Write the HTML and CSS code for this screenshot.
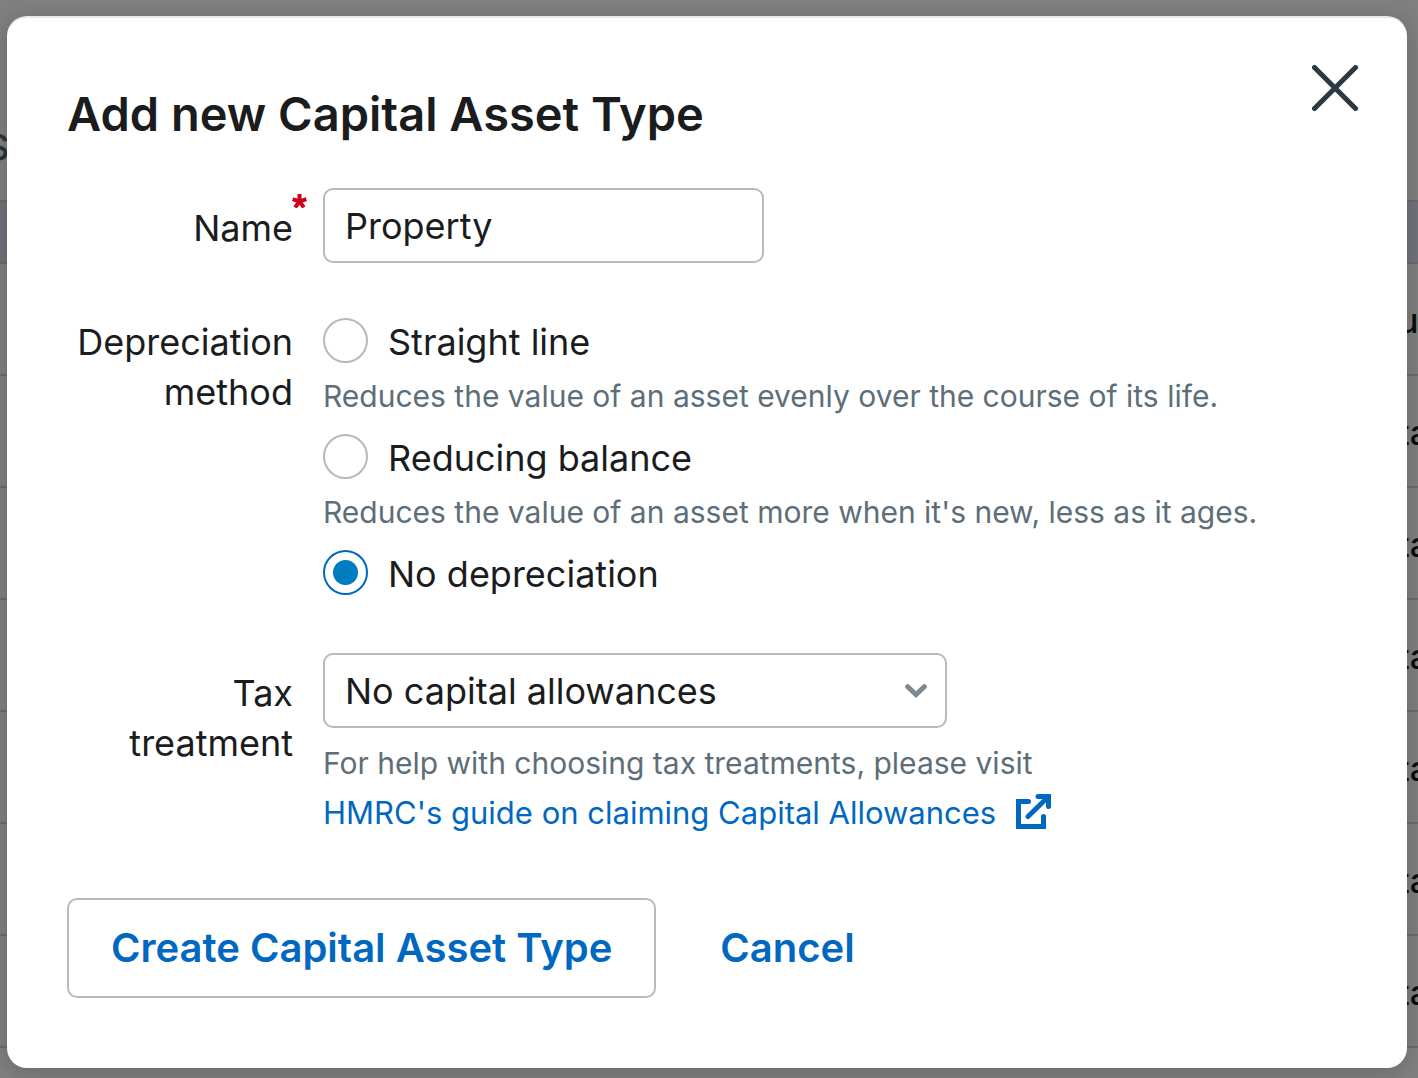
FILE: index.html
```html
<!DOCTYPE html>
<html lang="en">
<head>
<meta charset="utf-8">
<title>Add new Capital Asset Type</title>
<link rel="stylesheet" href="styles.css">
</head>
<body>
<div class="page" aria-hidden="true">
  <div class="page-top">S</div>
  <div class="page-band"></div>
  <div class="page-row"><span class="page-cell">u</span></div>
  <div class="page-row"><span class="page-cell">ta</span></div>
  <div class="page-row"><span class="page-cell">ta</span></div>
  <div class="page-row"><span class="page-cell">ta</span></div>
  <div class="page-row"><span class="page-cell">ta</span></div>
  <div class="page-row"><span class="page-cell">ta</span></div>
  <div class="page-row"><span class="page-cell">ta</span></div>
</div>

<div class="overlay">
  <div class="modal" role="dialog" aria-modal="true" aria-labelledby="title">
    <header class="modal-header">
      <h1 class="title" id="title">Add new Capital Asset Type</h1>
      <button class="close" type="button" aria-label="Close">
        <svg width="46" height="46" viewBox="0 0 46 46" fill="none" stroke="#2a3942" stroke-width="5" stroke-linecap="round"><path d="M2.5 2.5 43.5 43.5M43.5 2.5 2.5 43.5"/></svg>
      </button>
    </header>

    <form class="form">
      <div class="field">
        <label class="label" for="name">Name<svg class="required" width="15" height="14" viewBox="0 0 15 14" fill="none" stroke="#d0021b" stroke-width="4"><path d="M7.5 7.5V0M7.5 7.5.6 5.2M7.5 7.5l6.9-2.3M7.5 7.5 3.1 13.4M7.5 7.5l4.4 5.9"/></svg></label>
        <input class="text-input" id="name" type="text" value="Property" required>
      </div>

      <div class="field" role="radiogroup" aria-labelledby="method">
        <span class="label label-group" id="method">Depreciation method</span>
        <div class="options">
          <label class="option"><input class="radio" type="radio" name="method">Straight line</label>
          <p class="hint">Reduces the value of an asset evenly over the course of its life.</p>
          <label class="option"><input class="radio" type="radio" name="method">Reducing balance</label>
          <p class="hint">Reduces the value of an asset more when it's new, less as it ages.</p>
          <label class="option"><input class="radio" type="radio" name="method" checked>No depreciation</label>
        </div>
      </div>

      <div class="field">
        <label class="label" for="tax">Tax treatment</label>
        <div class="tax">
          <div class="select-box">
            <select class="select" id="tax"><option>No capital allowances</option></select>
            <svg class="chevron" width="22" height="14" viewBox="0 0 22 14" fill="none" stroke="#7a8a94" stroke-width="5" stroke-linecap="round"><path d="M2.7 2.7 11 10.5l8.3-7.8"/></svg>
          </div>
          <p class="help">For help with choosing tax treatments, please visit
            <a class="link" href="#guide">HMRC's guide on claiming Capital Allowances<svg class="external" width="35" height="35" viewBox="0 0 35 35" fill="none" stroke="#0068c0" stroke-width="5" stroke-linecap="round"><path d="M12.5 7.5H2.5v25h25V22.5"/><path d="M12 22.5 31 4M22 2.5h10.5V12.5"/></svg></a></p>
        </div>
      </div>

      <div class="actions">
        <button class="button button-outline" type="submit">Create Capital Asset Type</button>
        <button class="button" type="button">Cancel</button>
      </div>
    </form>
  </div>
</div>
</body>
</html>
```
FILE: styles.css
```css
* {
  box-sizing: border-box;
}

body {
  margin: 0;
  background: #808080;
  color: #1a1c1e;
  font-family: Inter, "Liberation Sans", sans-serif;
  font-size: 36px;
  line-height: 50px;
}

/* Dimmed page behind the dialog */
.page {
  height: 100vh;
  overflow: hidden;
}

.page-top {
  height: 202px;
  padding-top: 122px;
  margin-left: -14px;
  border-bottom: 2px solid #6b6b70;
  color: #2a3439;
  font-weight: 500;
}

.page-band {
  height: 62px;
  background: #72747b;
  border-bottom: 2px solid #6a6c72;
}

.page-row {
  display: flex;
  justify-content: flex-end;
  align-items: center;
  height: 112px;
  padding-top: 4px;
  border-bottom: 2px solid #6b6b70;
}

.page-cell {
  width: 20px;
  white-space: nowrap;
  font-size: 34px;
  font-weight: 500;
  color: #0d0e0f;
}

/* Dialog */
.overlay {
  position: absolute;
  inset: 0;
  padding: 16px 11px 10px 7px;
}

.modal {
  padding: 47px 49px 70px 60px;
  border-top: 2px solid #e3e9ed;
  border-radius: 20px;
  background: #fff;
  box-shadow: 0 4px 24px rgba(0, 0, 0, 0.2);
}

.modal-header {
  display: flex;
  justify-content: space-between;
  align-items: flex-start;
}

.title {
  margin: 17px 0 0;
  font-size: 47px;
  font-weight: 600;
  line-height: 64px;
}

.close {
  display: flex;
  padding: 0;
  border: 0;
  background: none;
}

.form {
  display: flex;
  flex-direction: column;
  margin-top: 42px;
}

.field {
  display: grid;
  grid-template-columns: 226px 1fr;
  column-gap: 30px;
  margin-bottom: 54px;
}

.label {
  position: relative;
  padding-top: 15px;
  text-align: right;
}

.label-group {
  padding-top: 0;
}

.required {
  position: absolute;
  top: 6px;
  right: -14px;
}

.text-input,
.select {
  height: 75px;
  padding: 0 20px;
  border: 2px solid #b3bac0;
  border-radius: 10px;
  background: #fff;
  color: inherit;
  font: inherit;
}

.text-input {
  width: 441px;
}

.option {
  display: flex;
  align-items: center;
  gap: 20px;
}

.radio {
  appearance: none;
  width: 45px;
  height: 45px;
  margin: 0 0 4px;
  border: 2px solid #b3bac0;
  border-radius: 50%;
}

.radio:checked {
  border-color: #0068c0;
  background: radial-gradient(circle, #007dc0 12px, #fff 13px);
}

.hint,
.help {
  margin: 0;
  color: #5d6e79;
  font-size: 30px;
}

.hint {
  margin: 4px 0 12px;
}

.select-box {
  position: relative;
  width: 624px;
}

.select {
  appearance: none;
  width: 100%;
}

.chevron {
  position: absolute;
  top: 31px;
  right: 20px;
  pointer-events: none;
}

.help {
  max-width: 760px;
  margin-top: 10px;
}

.link {
  display: flex;
  align-items: center;
  gap: 20px;
  color: #0068c0;
  font-size: 31px;
  text-decoration: none;
}

.external {
  margin-bottom: 4px;
}

.actions {
  display: flex;
  gap: 20px;
  margin-top: 6px;
}

.button {
  height: 100px;
  padding: 0 42px;
  border: 2px solid transparent;
  border-radius: 10px;
  background: #fff;
  color: #0068c0;
  font: inherit;
  font-size: 40px;
  font-weight: 600;
}

.button-outline {
  border-color: #b3bac0;
}
```
